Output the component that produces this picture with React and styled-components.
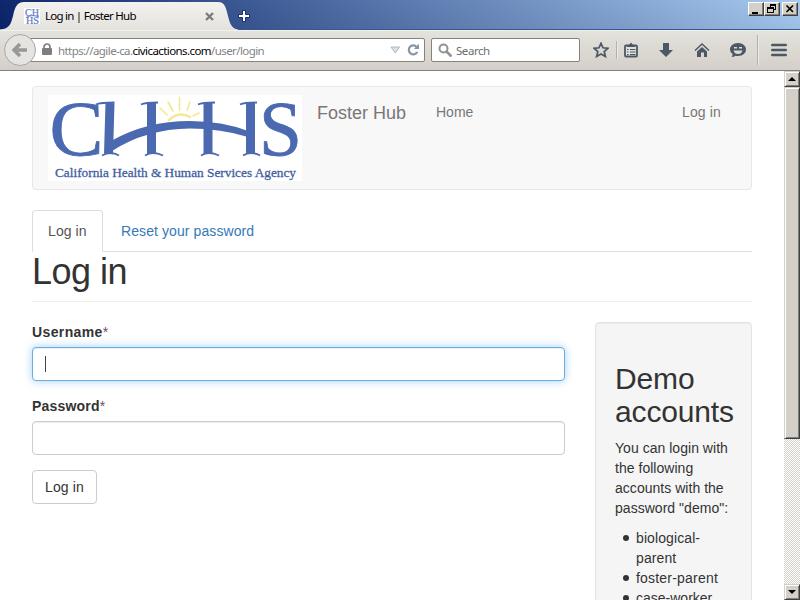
import React from 'react';
import styled, { createGlobalStyle, css } from 'styled-components';

const Global = createGlobalStyle`
  * { box-sizing: border-box; }
  html, body { margin: 0; padding: 0; overflow: hidden; background: #fff; }
  body { font: 14px/20px "Liberation Sans", Arial, sans-serif; color: #333; }
`;

const Window = styled.div`
  width: 800px; height: 600px; display: flex; flex-direction: column; overflow: hidden;
`;
const TitleBar = styled.header`
  height: 30px; flex: none; display: flex; align-items: flex-start;
  background: linear-gradient(rgba(255,255,255,.02), rgba(0,0,30,.06)), linear-gradient(97deg, #0a246a 0%, #a6caf0 100%);
  border-bottom: 1px solid #36588f;
`;
const Tab = styled.div`
  height: 30px; display: flex; flex: none;
  svg { display: block; flex: none; }
`;
const TabBody = styled.div`
  width: 194px; height: 28px; margin-top: 2px; padding: 0 3px 0 0;
  display: flex; align-items: center;
  background: linear-gradient(#f3f2ef, #e4e2dd);
`;
const chromeFont = css`font-family: "Noto Sans", "Open Sans", sans-serif; white-space: pre;`;
const TabTitle = styled.span`
  ${chromeFont} font-size: 11.5px; line-height: 16px; color: #000; width: 160px; margin-left: 5px; letter-spacing: -.75px;
`;
const NewTab = styled.div`margin: 9px 0 0 -1px; line-height: 0;`;
const WinButtons = styled.div`display: flex; margin: 2px 2px 0 auto;`;
const WinButton = styled.div`
  width: 16px; height: 14px; margin-left: ${p => p.$gap || 0}px; background: #d4d0c8;
  border: 1px solid; border-color: #fff #404040 #404040 #fff; box-shadow: inset -1px -1px #808080;
  svg { display: block; }
`;
const Toolbar = styled.div`
  height: 41px; flex: none; display: flex; align-items: center; padding: 0 0 2px 4px;
  background: linear-gradient(#e4e2dd, #d4cfc8); border-bottom: 1px solid #808080; border-top: 1px solid #f1f0ec;
`;
const BackButton = styled.div`
  width: 32px; height: 32px; border-radius: 50%; border: 1px solid #aaa7a3; background: #e6e4e0;
  display: grid; place-items: center; z-index: 1; flex: none;
`;
const UrlBox = styled.div`
  width: 397px; height: 24px; margin-left: -8px; background: #fff; border: 1px solid #85827f; border-radius: 2px;
  display: flex; align-items: center; padding-left: 12px; flex: none;
  svg { flex: none; }
`;
const Url = styled.div`
  ${chromeFont} font-size: 11.5px; line-height: 16px; color: #828282; width: 332px; margin: 2px 0 0 5px; letter-spacing: -.58px;
  b { color: #000; font-weight: 400; }
`;
const Reload = styled.svg`margin-left: 6px;`;
const SearchBox = styled.div`
  width: 149px; height: 24px; margin-left: 6px; background: #fff; border: 1px solid #85827f; border-radius: 2px;
  display: flex; align-items: center; padding-left: 6px; flex: none;
`;
const SearchText = styled.span`
  ${chromeFont} font-size: 11.5px; line-height: 16px; color: #6d6d6d; margin: 2px 0 0 4px; letter-spacing: -.45px;
`;
const Tools = styled.div`
  display: flex; align-items: center; margin-left: 13px; flex: none;
  svg { display: block; }
`;
const Gap = styled.span`width: ${p => p.$w}px;`;
const Divider = styled.span`
  width: 2px; height: ${p => p.$h}px; background: linear-gradient(90deg, #b3b0ac 50%, #edebe7 50%);
`;

const Viewport = styled.div`flex: 1; min-height: 0; display: flex;`;
const Page = styled.main`
  width: 784px; height: 529px; overflow: hidden; padding: 15px 32px 0; flex: none;
`;
const Navbar = styled.nav`
  width: 720px; height: 104px; border: 1px solid #e7e7e7; border-radius: 4px; background: #f8f8f8;
  display: flex; padding: 8px 15px 0; color: #777;
`;
const LogoImage = styled.svg`display: block; flex: none; overflow: visible;`;
const Brand = styled.span`
  font-size: 18px; line-height: 20px; margin: 8px 0 0 15px; width: 119px; white-space: nowrap;
`;
const NavItem = styled.span`
  margin-top: 7px; margin-left: ${p => (p.$right ? 'auto' : '0')}; margin-right: ${p => (p.$right ? '15px' : '0')};
  letter-spacing: ${p => (p.$right ? '.15px' : '0')};
`;
const Tabs = styled.div`
  display: flex; width: 720px; height: 42px; margin-top: 20px; border-bottom: 1px solid #ddd;
`;
const PageTab = styled.span`
  height: 42px; padding: 10px 15px; border: 1px solid transparent; margin-right: 2px; white-space: nowrap;
  color: #337ab7; letter-spacing: .09px;
  ${p => p.$active && css`
    width: 71px; color: #555; background: #fff; border-color: #ddd #ddd transparent; border-radius: 4px 4px 0 0;
  `}
`;
const Heading = styled.h1`
  width: 720px; margin: 0 0 20px; height: 50px; font-size: 36px; line-height: 39px; font-weight: 400;
  border-bottom: 1px solid #eee; letter-spacing: -.5px;
`;
const Columns = styled.div`display: flex; width: 720px; justify-content: space-between;`;
const Form = styled.form`width: 533px;`;
const Label = styled.label`
  display: block; font-weight: 700; height: 20px; margin-bottom: 5px; letter-spacing: ${p => p.$ls};
  span { color: #7d4850; font-weight: 400; letter-spacing: 0; }
`;
const Input = styled.div`
  height: 34px; margin-bottom: 15px; padding: 8px 12px; border: 1px solid #ccc; border-radius: 4px; background: #fff;
  box-shadow: inset 0 1px 1px rgba(0,0,0,.075);
  ${p => p.$focus && css`
    border-color: #66afe9; box-shadow: inset 0 1px 1px rgba(0,0,0,.075), 0 0 8px rgba(102,175,233,.6);
  `}
`;
const Caret = styled.div`width: 1px; height: 16px; background: #444;`;
const Submit = styled.button`
  height: 34px; width: 65px; padding: 0; font: inherit; color: #333; background: #fff; border: 1px solid #ccc; border-radius: 4px;
  letter-spacing: .12px;
`;
const Well = styled.aside`
  width: 157px; height: 330px; padding: 19px; border: 1px solid #e3e3e3; border-radius: 4px; background: #f5f5f5;
  box-shadow: inset 0 1px 1px rgba(0,0,0,.05); white-space: nowrap;
  h2 { margin: 20px 0 10px; font-size: 30px; font-weight: 400; line-height: 33px; letter-spacing: -.15px; }
  p { margin: 0 0 10px; letter-spacing: .03px; }
  ul { margin: 0; padding: 0; list-style: none; }
`;
const Account = styled.li`
  display: flex; letter-spacing: ${p => p.$ls || '.1px'};
  &::before { content: ''; width: 6px; height: 6px; margin: 7px 7px 0 8px; border-radius: 50%; background: #333; flex: none; }
`;

const Scrollbar = styled.div`
  width: 16px; display: flex; flex-direction: column;
  background: repeating-conic-gradient(#fff 0 25%, #d4d0c8 0 50%) 0 0 / 2px 2px;
`;
const raised = css`
  background: #d4d0c8; border: 1px solid; border-color: #d4d0c8 #404040 #404040 #d4d0c8;
  box-shadow: inset 1px 1px #fff, inset -1px -1px #808080;
`;
const ScrollButton = styled.div`${raised} height: 16px; display: grid; place-items: center; margin-top: ${p => p.$end ? 'auto' : 0};`;
const Thumb = styled.div`${raised} height: 352px;`;

const Logo = () => (
  <LogoImage width="254" height="86" viewBox="48 95 254 86">
    <rect x="48" y="95" width="254" height="86" fill="#fff" />
    <g fill="none" stroke="#f7e78f" strokeWidth="1.6" strokeLinecap="round">
      <path d="M160 108l7 7M168 102l5 9M179.500 97v13M190 102l-3 8M199 113l-6 3" />
      <path d="M169 120q10-9 21-3" strokeWidth="2.500" />
    </g>
    <g fill="#4a69b1" stroke="#4a69b1" strokeWidth=".8">
      <text x="49.500" y="154.500" fontFamily="Liberation Serif, serif" fontSize="79" textLength="54" lengthAdjust="spacingAndGlyphs">C</text>
      <text x="259" y="154.500" fontFamily="Liberation Serif, serif" fontSize="79" textLength="43" lengthAdjust="spacingAndGlyphs">S</text>
    </g>
    <path fill="#4a69b1" d="M111 141Q146 121 190 121Q222 121 248 131V137Q221 128.500 190 128.500Q146 129 112 151Z" />
    <g fill="none" stroke="#4a69b1">
      <path d="M110 103L108.500 154M151.500 103V154M208 103V154M250.500 103V154" strokeWidth="9" />
      <path d="M96 104.500q4-2 18.500-2M141 104.500q4-2 17-2M198 104.500q4-2 17-2M240 104.500q4-2 17-2M102 155.500q5-2.500 8-2.500q5 0 9 2.500M145 155.500q4-2.500 8-2.500q5 0 10 2.500M201 155.500q4-2.500 8-2.500q5 0 10 2.500M243 155.500q4-2.500 8-2.500q5 0 9 2.500" strokeWidth="1.800" />
    </g>
    <text x="55" y="177" fill="#3f609f" stroke="#3f609f" strokeWidth=".3" fontFamily="Liberation Serif, serif" fontSize="13.500" textLength="241" lengthAdjust="spacingAndGlyphs">California Health &amp; Human Services Agency</text>
  </LogoImage>
);

const Favicon = () => (
  <svg width="16" height="16">
    <rect width="16" height="16" fill="#fff" />
    <g fill="#5c7cc2" stroke="#5c7cc2" strokeWidth=".2" fontFamily="Liberation Serif, serif" fontSize="9.500">
      <text x="1" y="7.500" textLength="14" lengthAdjust="spacingAndGlyphs">CH</text>
      <text x="2" y="15.500" textLength="13" lengthAdjust="spacingAndGlyphs">HS</text>
    </g>
    <path d="M2 9.500Q8 6 15 9" fill="none" stroke="#6684c6" />
  </svg>
);

const TabEdge = ({ id, width, d }) => (
  <svg width={width} height="30">
    <linearGradient id={id} x1="0" y1="2" x2="0" y2="30" gradientUnits="userSpaceOnUse">
      <stop stopColor="#f3f2ef" /><stop offset="1" stopColor="#e4e2dd" />
    </linearGradient>
    <path d={d} fill={`url(#${id})`} />
  </svg>
);

const iconColor = '#4c5866';

export default function App() {
  return (
    <Window>
      <Global />
      <TitleBar>
        <Tab>
          <TabEdge id="edgeLeft" width="24" d="M0 30V29.500C10 29 11 23 13 16C15 7 17 2 24 2V30Z" />
          <TabBody>
            <Favicon />
            <TabTitle>Log in | Foster Hub</TabTitle>
            <svg width="9" height="9" viewBox="0 0 9 9"><path d="M1 1l7 7M8 1l-7 7" stroke="#7b7b7b" strokeWidth="2.300" /></svg>
          </TabBody>
          <TabEdge id="edgeRight" width="20" d="M0 2C7 2 8 8 10 16C12 24 14 29 20 29.500V30H0Z" />
        </Tab>
        <NewTab>
          <svg width="14" height="14"><path d="M5.500 1.500h3v4h4v3h-4v4h-3v-4h-4v-3h4z" fill="#fff" stroke="#182f66" /></svg>
        </NewTab>
        <WinButtons>
          <WinButton><svg width="14" height="12"><path d="M3 9h6v2h-6z" /></svg></WinButton>
          <WinButton><svg width="14" height="12" shapeRendering="crispEdges"><path d="M5 1h6v6h-2v-1h1v-3h-4v1h-1zM2 4h7v6h-7zM3 6v3h5v-3z" fillRule="evenodd" /></svg></WinButton>
          <WinButton $gap={2}><svg width="14" height="12"><path d="M3.500 2.500l6.500 6.500M10 2.500l-6.500 6.500" stroke="#000" strokeWidth="1.700" /></svg></WinButton>
        </WinButtons>
      </TitleBar>

      <Toolbar>
        <BackButton>
          <svg width="16" height="16"><path d="M8 2L2 8l6 6M3 8h12" fill="none" stroke="#989898" strokeWidth="3.400" /></svg>
        </BackButton>
        <UrlBox>
          <svg width="12" height="13"><rect x="1" y="5" width="10" height="7" rx="1" fill="#7e7e7e" /><path d="M3 6V4a3 3 0 0 1 6 0v2" fill="none" stroke="#7e7e7e" strokeWidth="1.700" /></svg>
          <Url>https://agile-ca.<b>civicactions.com</b>/user/login</Url>
          <svg width="11" height="8"><path d="M1 1h8.500L5.300 7z" fill="#dce0e6" stroke="#aeb5bf" /></svg>
          <Reload width="13" height="13"><path d="M10.300 8.900a4.500 4.500 0 1 1-.8-5.200" fill="none" stroke="#8597a5" strokeWidth="2.200" /><path d="M12 .8v5.200h-5.200z" fill="#8597a5" /></Reload>
        </UrlBox>
        <SearchBox>
          <svg width="14" height="14"><circle cx="5.500" cy="5.500" r="4" fill="none" stroke="#929292" strokeWidth="2" /><path d="M8.500 8.500l5 5" stroke="#929292" strokeWidth="2.600" /></svg>
          <SearchText>Search</SearchText>
        </SearchBox>
        <Tools>
          <svg width="16" height="16"><path d="M8 1.300l2 4.500 5 .5-3.800 3.200 1.200 5L8 12l-4.400 2.500 1.200-5L1 6.300l5-.5z" fill="none" stroke={iconColor} strokeWidth="1.700" /></svg>
          <Gap $w={7} /><Divider $h={18} /><Gap $w={5} />
          <svg width="16" height="16"><rect x="2" y="3.500" width="12" height="11" rx="1" fill="#e2e0dc" stroke={iconColor} strokeWidth="1.800" /><path d="M4 3h2l2-2.500L10 3h2v2H4z" fill={iconColor} /><path d="M4 7.500h1.500M7 7.500h5.500M4 10h1.500M7 10h5.500M4 12.500h1.500M7 12.500h5.500" stroke={iconColor} strokeWidth="1" /></svg>
          <Gap $w={19} />
          <svg width="16" height="16"><path d="M5 1h6v7h4l-7 7-7-7h4z" fill={iconColor} /></svg>
          <Gap $w={20} />
          <svg width="16" height="16"><path d="M1 8.500L8 2l7 6.500" fill="none" stroke={iconColor} strokeWidth="1.500" /><path d="M3 9.500l5-4.500L13 9.500V15h-3v-4.500H7V15H3z" fill={iconColor} /></svg>
          <Gap $w={20} />
          <svg width="16" height="16"><path d="M8 1c5 0 8 3 8 6.500S13 14 8 14q-1.500 0-2.500-.3Q4 15 1.500 15q1.200-1.200 1-3Q0 10.500 0 7.500C0 4 3 1 8 1z" fill={iconColor} /><path d="M3.500 8.500h9Q11.500 12 8 12T3.500 8.500zM4 5h3v1.500H4zM9 5h3v1.500H9z" fill="#dedbd6" /></svg>
          <Gap $w={11} /><Divider $h={30} /><Gap $w={12} />
          <svg width="16" height="14"><path d="M1.300 2h13.400M1.300 7h13.400M1.300 12h13.400" stroke={iconColor} strokeWidth="2.600" strokeLinecap="round" /></svg>
        </Tools>
      </Toolbar>

      <Viewport>
        <Page>
          <Navbar>
            <Logo />
            <Brand>Foster Hub</Brand>
            <NavItem>Home</NavItem>
            <NavItem $right>Log in</NavItem>
          </Navbar>
          <Tabs>
            <PageTab $active>Log in</PageTab>
            <PageTab>Reset your password</PageTab>
          </Tabs>
          <Heading>Log in</Heading>
          <Columns>
            <Form>
              <Label $ls=".38px">Username<span>*</span></Label>
              <Input $focus><Caret /></Input>
              <Label $ls=".2px">Password<span>*</span></Label>
              <Input />
              <Submit type="button">Log in</Submit>
            </Form>
            <Well>
              <h2>Demo<br />accounts</h2>
              <p>You can login with<br />the following<br />accounts with the<br />password "demo":</p>
              <ul>
                <Account>biological-<br />parent</Account>
                <Account $ls=".2px">foster-parent</Account>
                <Account $ls="0">case-worker</Account>
              </ul>
            </Well>
          </Columns>
        </Page>
        <Scrollbar>
          <ScrollButton><svg width="8" height="4"><path d="M4 0l4 4H0z" /></svg></ScrollButton>
          <Thumb />
          <ScrollButton $end><svg width="8" height="4"><path d="M0 0h8L4 4z" /></svg></ScrollButton>
        </Scrollbar>
      </Viewport>
    </Window>
  );
}
